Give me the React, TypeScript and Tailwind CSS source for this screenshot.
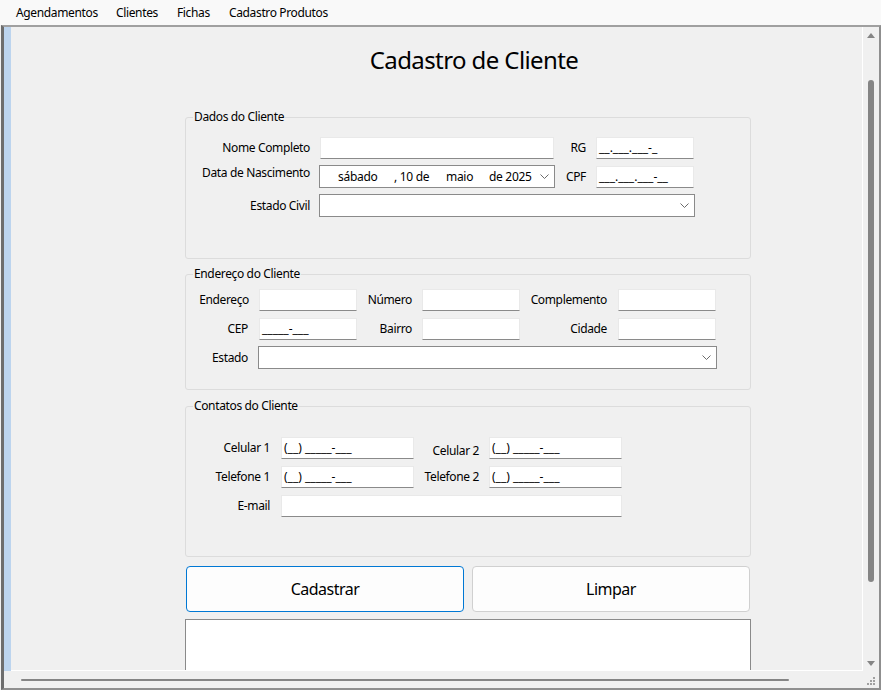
import type { ReactNode } from 'react'

function Label({ className = '', children }: { className?: string; children: ReactNode }) {
  return (
    <div className={`shrink-0 text-right text-[12px] leading-[16px] tracking-[-0.36px] text-black ${className}`}>
      {children}
    </div>
  )
}

function TextBox({ className = '', mask }: { className?: string; mask?: string }) {
  return (
    <div
      className={`flex h-[22px] shrink-0 items-center border border-[#e9e9e9] border-b-[#8a8a8a] bg-white pl-[2px] text-[12px] leading-none text-black ${className}`}
    >
      {mask}
    </div>
  )
}

function Chevron() {
  return (
    <svg width="9" height="5" viewBox="0 0 9 5" className="shrink-0">
      <polyline points="0.5,0.5 4.5,4.5 8.5,0.5" fill="none" stroke="#6b6b6b" strokeWidth="1" />
    </svg>
  )
}

function Combo({ className = '', children }: { className?: string; children?: ReactNode }) {
  return (
    <div
      className={`flex h-[23px] shrink-0 items-center border border-[#8a8a8a] bg-white pr-[5px] text-[12px] leading-none tracking-[-0.3px] text-black ${className}`}
    >
      <div className="flex flex-1 items-center">{children}</div>
      <Chevron />
    </div>
  )
}

function GroupBox({ title, className = '', children }: { title: string; className?: string; children: ReactNode }) {
  return (
    <fieldset className={`w-[566px] rounded-[3px] border border-[#dcdcdc] ${className}`}>
      <legend className="ml-[7px] px-[1px] text-[12px] leading-[16px] tracking-[-0.36px] text-black">{title}</legend>
      {children}
    </fieldset>
  )
}

export default function App() {
  return (
    <div className="flex h-[690px] w-[881px] flex-col overflow-hidden bg-[#f0f0f0] font-['Noto_Sans','Open_Sans',sans-serif] text-black">
      {/* menu */}
      <div className="flex h-[25px] shrink-0 items-center bg-[#f9f9f9] pl-[16px] text-[12px] tracking-[-0.36px]">
        <span className="w-[100px]">Agendamentos</span>
        <span className="w-[61px]">Clientes</span>
        <span className="w-[52px]">Fichas</span>
        <span>Cadastro Produtos</span>
      </div>

      <div className="ml-[1px] flex min-h-0 flex-1 flex-col border-t-2 border-r-2 border-b-2 border-l-[3px] border-t-[#a0a0a0] border-r-[#8f8f8f] border-b-[#8f8f8f] border-l-[#6d6d6d]">
        <div className="flex min-h-0 flex-1">
          <div className="w-[7px] shrink-0 bg-[#bcd4ee]" />

          {/* scroll content */}
          <div className="min-w-0 flex-1 overflow-hidden border-r border-b border-white">
            <div className="ml-[174px] mt-[17px] w-[566px] pl-[12px] text-center text-[24px] leading-[32px] tracking-[-0.6px]">
              Cadastro de Cliente
            </div>

            <div className="ml-[174px] flex w-[566px] flex-col">
              <GroupBox title="Dados do Cliente" className="mt-[33px] pt-[12px] pb-[41px]">
                <div className="flex items-center">
                  <Label className="w-[124px]">Nome Completo</Label>
                  <TextBox className="ml-[10px] w-[234px]" />
                  <Label className="w-[32px]">RG</Label>
                  <TextBox className="ml-[10px] w-[98px]" mask="__.___.___-_" />
                </div>
                <div className="mt-[6px] flex items-center">
                  <Label className="w-[124px] self-start">Data de Nascimento</Label>
                  <Combo className="ml-[9px] w-[236px]">
                    <span className="ml-[18px] w-[56px]">sábado</span>
                    <span className="w-[52px]">, 10 de</span>
                    <span className="w-[43px]">maio</span>
                    <span>de 2025</span>
                  </Combo>
                  <Label className="w-[31px]">CPF</Label>
                  <TextBox className="ml-[10px] w-[98px]" mask="___.___.___-__" />
                </div>
                <div className="mt-[6px] flex items-center">
                  <Label className="w-[124px]">Estado Civil</Label>
                  <Combo className="ml-[9px] w-[376px]" />
                </div>
              </GroupBox>

              <GroupBox title="Endereço do Cliente" className="mt-[7px] pt-[7px] pb-[20px]">
                <div className="flex items-center">
                  <Label className="w-[63px]">Endereço</Label>
                  <TextBox className="ml-[10px] w-[98px]" />
                  <Label className="w-[55px]">Número</Label>
                  <TextBox className="ml-[10px] w-[98px]" />
                  <Label className="w-[87px]">Complemento</Label>
                  <TextBox className="ml-[11px] w-[98px]" />
                </div>
                <div className="mt-[7px] flex items-center">
                  <Label className="w-[62px]">CEP</Label>
                  <TextBox className="ml-[11px] w-[98px]" mask="_____-___" />
                  <Label className="w-[55px]">Bairro</Label>
                  <TextBox className="ml-[10px] w-[98px]" />
                  <Label className="w-[87px]">Cidade</Label>
                  <TextBox className="ml-[11px] w-[98px]" />
                </div>
                <div className="mt-[6px] flex items-center">
                  <Label className="w-[62px]">Estado</Label>
                  <Combo className="ml-[10px] w-[459px]" />
                </div>
              </GroupBox>

              <GroupBox title="Contatos do Cliente" className="mt-[8px] pt-[23px] pb-[39px]">
                <div className="flex items-center">
                  <Label className="w-[84px]">Celular 1</Label>
                  <TextBox className="ml-[11px] w-[133px]" mask="(__) _____-___" />
                  <Label className="w-[65px] self-end">Celular 2</Label>
                  <TextBox className="ml-[10px] w-[133px]" mask="(__) _____-___" />
                </div>
                <div className="mt-[7px] flex items-center">
                  <Label className="w-[84px]">Telefone 1</Label>
                  <TextBox className="ml-[11px] w-[133px]" mask="(__) _____-___" />
                  <Label className="w-[65px]">Telefone 2</Label>
                  <TextBox className="ml-[10px] w-[133px]" mask="(__) _____-___" />
                </div>
                <div className="mt-[7px] flex items-center">
                  <Label className="w-[84px]">E-mail</Label>
                  <TextBox className="ml-[11px] w-[341px]" />
                </div>
              </GroupBox>

              <div className="mt-[9px] flex gap-[8px] pl-[1px]">
                <button
                  type="button"
                  className="h-[46px] w-[278px] rounded-[4px] border border-[#0078d4] bg-[#fdfdfd] text-[16px] tracking-[-0.5px]"
                >
                  Cadastrar
                </button>
                <button
                  type="button"
                  className="h-[46px] w-[278px] rounded-[4px] border border-[#d0d0d0] bg-[#fdfdfd] text-[16px] tracking-[-0.5px]"
                >
                  Limpar
                </button>
              </div>

              <div className="mt-[7px] h-[90px] w-[566px] border border-[#8a8a8a] bg-white" />
            </div>
          </div>

          {/* vertical scrollbar */}
          <div className="flex w-[16px] shrink-0 flex-col items-center pt-[6px] pb-[5px]">
            <svg width="8" height="5" viewBox="0 0 8 5">
              <polygon points="4,0 8,5 0,5" fill="#858585" />
            </svg>
            <div className="mt-[42px] h-[502px] w-[6px] rounded-full bg-[#858585]" />
            <svg width="8" height="5" viewBox="0 0 8 5" className="mt-auto">
              <polygon points="0,0 8,0 4,5" fill="#858585" />
            </svg>
          </div>
        </div>

        {/* horizontal scrollbar */}
        <div className="flex h-[17px] shrink-0">
          <div className="flex flex-1 items-center">
            <div className="ml-[17px] h-[2px] w-[768px] rounded-full bg-[#858585]" />
          </div>
          <div className="flex w-[16px] items-end justify-center pb-[2px]">
            <svg width="9" height="9" viewBox="0 0 9 9">
              <rect x="6" y="0" width="2" height="2" fill="#a0a0a0" />
              <rect x="3" y="3" width="2" height="2" fill="#a0a0a0" />
              <rect x="6" y="3" width="2" height="2" fill="#a0a0a0" />
              <rect x="0" y="6" width="2" height="2" fill="#a0a0a0" />
              <rect x="3" y="6" width="2" height="2" fill="#a0a0a0" />
              <rect x="6" y="6" width="2" height="2" fill="#a0a0a0" />
            </svg>
          </div>
        </div>
      </div>
    </div>
  )
}
